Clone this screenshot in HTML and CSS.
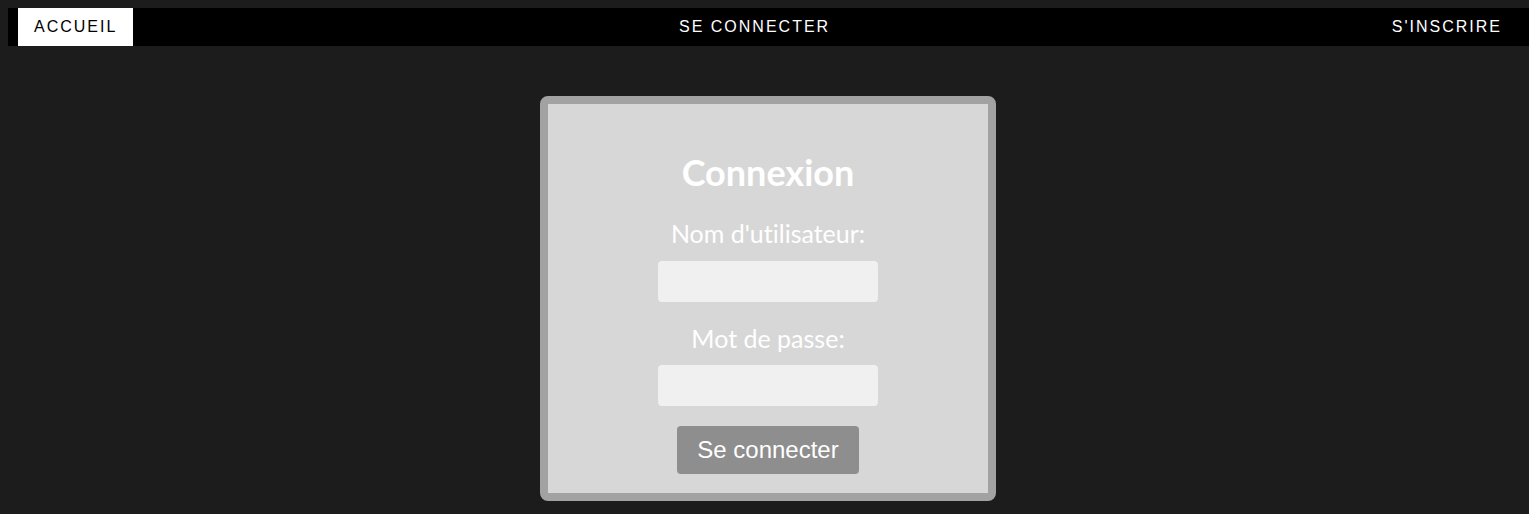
FILE: index.html
```html
<!DOCTYPE html>
<html lang="fr">
<head>
<meta charset="utf-8">
<title>Connexion</title>
<link rel="stylesheet" href="styles.css">
</head>
<body>
<nav class="topnav">
  <a class="nav-link active" href="#">Accueil</a>
  <a class="nav-link" href="#">Se connecter</a>
  <a class="nav-link" href="#">S'inscrire</a>
</nav>
<main class="page">
  <form class="card">
    <h2 class="title">Connexion</h2>
    <label class="field-label" for="user">Nom d'utilisateur:</label>
    <input class="field" id="user" type="text">
    <label class="field-label second" for="pass">Mot de passe:</label>
    <input class="field" id="pass" type="password">
    <button class="submit" type="button">Se connecter</button>
  </form>
</main>
</body>
</html>
```
FILE: styles.css
```css
html, body {
  background: #1c1c1c;
}
body {
  margin: 8px 0 0 8px;
  font-family: "Liberation Sans", Arial, sans-serif;
}
.topnav {
  display: flex;
  justify-content: space-between;
  background: #000;
  padding: 0 11px 0 10px;
  height: 38px;
}
.nav-link {
  display: block;
  padding: 0 16px;
  line-height: 38px;
  font-size: 16px;
  letter-spacing: 2px;
  text-transform: uppercase;
  color: #fff;
  text-decoration: none;
}
.nav-link.active {
  background: #fff;
  color: #000;
}
.page {
  display: flex;
  justify-content: center;
  padding: 50px 1px 0 0;
}
.card {
  width: 440px;
  box-sizing: content-box;
  background: #d7d7d7;
  border: 8px solid #a2a2a2;
  border-radius: 8px;
  padding: 46px 0 19px;
  display: flex;
  flex-direction: column;
  align-items: center;
  font-family: Lato, "Open Sans", sans-serif;
  font-variant-ligatures: none;
  color: #fff;
}
.title {
  margin: 0 0 24px;
  font-size: 36px;
  line-height: 44px;
  font-weight: 700;
}
.field-label {
  display: block;
  font-size: 25px;
  line-height: 30px;
  margin-bottom: 13px;
}
.field-label.second {
  margin-top: 21px;
  margin-bottom: 12px;
}
.field {
  width: 220px;
  height: 41px;
  box-sizing: border-box;
  border: none;
  border-radius: 4px;
  background: #f0f0f0;
  padding: 0 8px;
  font-size: 16px;
}
.submit {
  margin-top: 20px;
  height: 48px;
  padding: 0 20px;
  border: none;
  border-radius: 4px;
  background: #8e8e8e;
  color: #fff;
  font-family: "Liberation Sans", Arial, sans-serif;
  font-size: 24px;
  cursor: pointer;
}
```
